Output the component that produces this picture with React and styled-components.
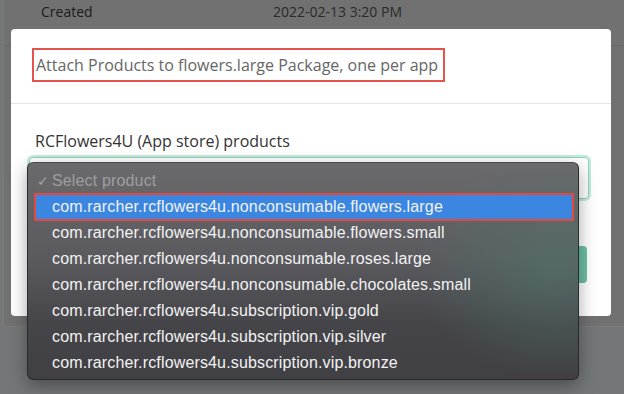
import React from "react";
import styled, { createGlobalStyle } from "styled-components";

const GlobalStyle = createGlobalStyle`
  html, body {
    margin: 0;
    padding: 0;
    background: #747777;
  }
  * {
    box-sizing: border-box;
  }
`;

const products = [
  "com.rarcher.rcflowers4u.nonconsumable.flowers.large",
  "com.rarcher.rcflowers4u.nonconsumable.flowers.small",
  "com.rarcher.rcflowers4u.nonconsumable.roses.large",
  "com.rarcher.rcflowers4u.nonconsumable.chocolates.small",
  "com.rarcher.rcflowers4u.subscription.vip.gold",
  "com.rarcher.rcflowers4u.subscription.vip.silver",
  "com.rarcher.rcflowers4u.subscription.vip.bronze",
];

const Page = styled.div`
  position: relative;
  width: 624px;
  height: 394px;
  overflow: hidden;
  background: #747777;
  font-family: "Open Sans", "Noto Sans", sans-serif;
`;

/* the details card behind the dimmed overlay */
const Panel = styled.div`
  margin-left: 3px;
  height: 327px;
  background: #717171;
  border-left: 1px solid #7a7a7a;
  border-bottom: 1px solid #7c7c7c;
`;

const DetailRow = styled.div`
  display: flex;
  align-items: center;
  height: 46px;
  padding: 0 0 22px 37px;
  border-bottom: 1px solid #676767;
  font-size: 14px;
  color: #1c1c1c;
`;

const DetailLabel = styled.span`
  width: 232px;
`;

const DetailValue = styled.span`
  color: #2a2a2a;
`;

const Modal = styled.div`
  position: absolute;
  left: 11px;
  top: 29px;
  width: 600px;
  height: 287px;
  background: #ffffff;
  border-radius: 4px;
`;

const ModalHeader = styled.div`
  height: 75px;
  padding: 19px 21px 0;
  border-bottom: 1px solid #e4e4e4;
`;

const TitleBox = styled.div`
  display: inline-block;
  height: 34px;
  padding: 2px 5px 0 2px;
  border: 2px solid #e5544c;
  font-size: 16px;
  line-height: 26px;
  color: #666666;
`;

const ModalBody = styled.div`
  padding: 25px 22px 0 18px;
`;

const FieldLabel = styled.div`
  padding-left: 6px;
  font-size: 16px;
  line-height: 24px;
  color: #333333;
`;

const SelectWrap = styled.div`
  position: relative;
  margin-top: 4px;
`;

const SelectBox = styled.div`
  height: 42px;
  border: 1px solid #8fd3bb;
  border-radius: 4px;
  box-shadow: 0 0 0 2px #c6eadd;
`;

const Actions = styled.div`
  display: flex;
  justify-content: flex-end;
  margin-top: 47px;
  padding-right: 2px;
`;

const SaveButton = styled.div`
  width: 110px;
  height: 37px;
  border-radius: 4px;
  background: #6cc0a5;
`;

/* native select popup, drawn over the modal */
const OptionMenu = styled.div`
  position: absolute;
  left: -2px;
  top: 5px;
  width: 552px;
  height: 218px;
  padding: 5px 4px 0 6px;
  border-radius: 6px;
  border: 1px solid #2b2b2e;
  border-top-color: #4a4a4d;
  background:
    radial-gradient(ellipse 140px 110px at 96% 48%, rgba(80, 120, 108, 0.55), rgba(80, 120, 108, 0) 100%),
    linear-gradient(180deg, #6a6a6d 0%, #5a5a5e 45%, #454549 75%, #404044 100%);
  box-shadow: 0 6px 18px rgba(0, 0, 0, 0.35);
  font-family: "Liberation Sans", Arial, sans-serif;
  font-size: 16px;
  letter-spacing: 0.15px;
`;

const Option = styled.div`
  display: flex;
  align-items: center;
  height: ${(p) => (p.$active ? "28px" : "26px")};
  margin: ${(p) => (p.$active ? "-1px 0" : "0")};
  padding-left: ${(p) => (p.$active ? "16px" : "18px")};
  color: ${(p) => (p.$placeholder ? "#9e9ea1" : "#f2f2f3")};
  background: ${(p) => (p.$active ? "#3a86e1" : "transparent")};
  border: ${(p) => (p.$active ? "2px solid #e04a40" : "none")};
  white-space: nowrap;
`;

const Check = styled.span`
  width: 15px;
  margin-left: -15px;
  color: #a2a2a5;
  font-size: 14px;
`;

export default function App() {
  return (
    <Page>
      <GlobalStyle />
      <Panel>
        <DetailRow>
          <DetailLabel>Created</DetailLabel>
          <DetailValue>2022-02-13 3:20 PM</DetailValue>
        </DetailRow>
      </Panel>

      <Modal>
        <ModalHeader>
          <TitleBox>Attach Products to flowers.large Package, one per app</TitleBox>
        </ModalHeader>
        <ModalBody>
          <FieldLabel>RCFlowers4U (App store) products</FieldLabel>
          <SelectWrap>
            <SelectBox />
            <OptionMenu>
              <Option $placeholder>
                <Check>✓</Check>Select product
              </Option>
              {products.map((p, i) => (
                <Option key={p} $active={i === 0}>
                  {p}
                </Option>
              ))}
            </OptionMenu>
          </SelectWrap>
          <Actions>
            <SaveButton />
          </Actions>
        </ModalBody>
      </Modal>
    </Page>
  );
}
